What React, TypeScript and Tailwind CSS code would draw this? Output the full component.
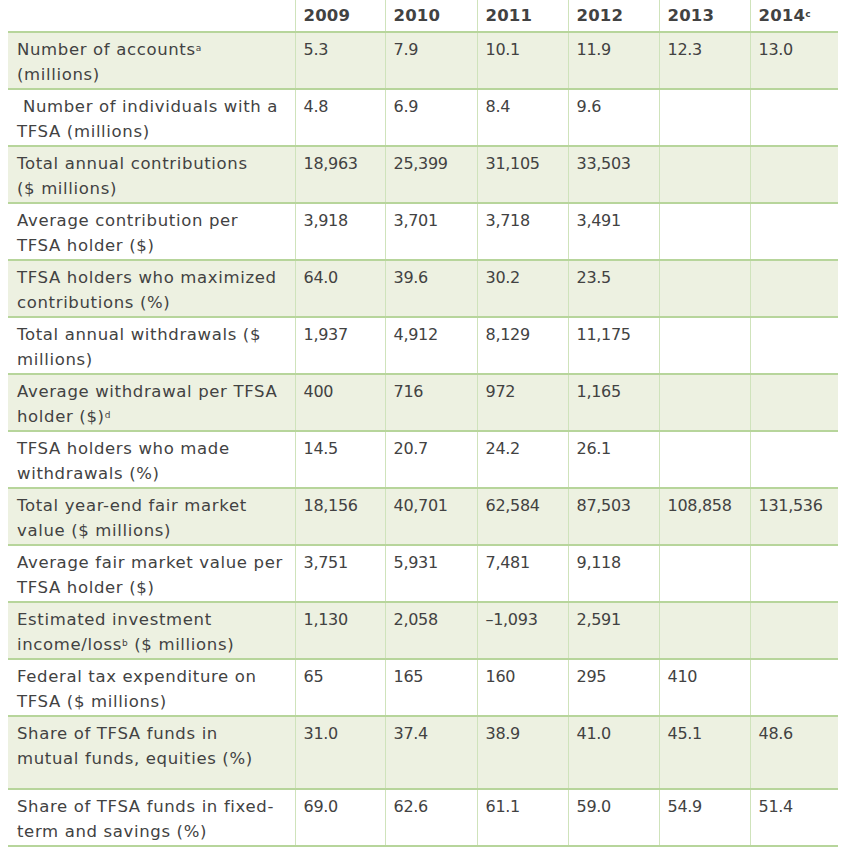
import type { ReactNode } from "react"

type Row = {
  label: ReactNode
  values: string[]
  tall?: boolean
}

const YEARS: ReactNode[] = [
  "2009",
  "2010",
  "2011",
  "2012",
  "2013",
  <>
    2014<sup className="text-[9px] font-bold">c</sup>
  </>,
]

const ROWS: Row[] = [
  {
    label: (
      <>
        Number of accounts<sup className="text-[9px]">a</sup>
        <br />
        (millions)
      </>
    ),
    values: ["5.3", "7.9", "10.1", "11.9", "12.3", "13.0"],
  },
  {
    label: (
      <>
        {"\u00a0"}Number of individuals with a<br />
        TFSA (millions)
      </>
    ),
    values: ["4.8", "6.9", "8.4", "9.6", "", ""],
  },
  {
    label: (
      <>
        Total annual contributions
        <br />
        ($ millions)
      </>
    ),
    values: ["18,963", "25,399", "31,105", "33,503", "", ""],
  },
  {
    label: (
      <>
        Average contribution per
        <br />
        TFSA holder ($)
      </>
    ),
    values: ["3,918", "3,701", "3,718", "3,491", "", ""],
  },
  {
    label: (
      <>
        TFSA holders who maximized
        <br />
        contributions (%)
      </>
    ),
    values: ["64.0", "39.6", "30.2", "23.5", "", ""],
  },
  {
    label: (
      <>
        Total annual withdrawals ($<br />
        millions)
      </>
    ),
    values: ["1,937", "4,912", "8,129", "11,175", "", ""],
  },
  {
    label: (
      <>
        Average withdrawal per TFSA
        <br />
        holder ($)<sup className="text-[9px]">d</sup>
      </>
    ),
    values: ["400", "716", "972", "1,165", "", ""],
  },
  {
    label: (
      <>
        TFSA holders who made
        <br />
        withdrawals (%)
      </>
    ),
    values: ["14.5", "20.7", "24.2", "26.1", "", ""],
  },
  {
    label: (
      <>
        Total year-end fair market
        <br />
        value ($ millions)
      </>
    ),
    values: ["18,156", "40,701", "62,584", "87,503", "108,858", "131,536"],
  },
  {
    label: (
      <>
        Average fair market value per
        <br />
        TFSA holder ($)
      </>
    ),
    values: ["3,751", "5,931", "7,481", "9,118", "", ""],
  },
  {
    label: (
      <>
        Estimated investment
        <br />
        income/loss<sup className="text-[9px]">b</sup> ($ millions)
      </>
    ),
    values: ["1,130", "2,058", "\u20131,093", "2,591", "", ""],
  },
  {
    label: (
      <>
        Federal tax expenditure on
        <br />
        TFSA ($ millions)
      </>
    ),
    values: ["65", "165", "160", "295", "410", ""],
  },
  {
    label: (
      <>
        Share of TFSA funds in
        <br />
        mutual funds, equities (%)
      </>
    ),
    values: ["31.0", "37.4", "38.9", "41.0", "45.1", "48.6"],
    tall: true,
  },
  {
    label: (
      <>
        Share of TFSA funds in fixed-
        <br />
        term and savings (%)
      </>
    ),
    values: ["69.0", "62.6", "61.1", "59.0", "54.9", "51.4"],
  },
]

export default function App() {
  return (
    <div className="min-h-screen bg-white px-2 font-['DejaVu_Sans',sans-serif] leading-[25px] text-[#424242]">
      <table className="w-[830px] table-fixed border-collapse">
        <colgroup>
          <col className="w-[287px]" />
          <col className="w-[90px]" />
          <col className="w-[92px]" />
          <col className="w-[91px]" />
          <col className="w-[91px]" />
          <col className="w-[91px]" />
          <col className="w-[88px]" />
        </colgroup>
        <thead>
          <tr className="h-[32px] border-b-2 border-[#b7d59b]">
            <th />
            {YEARS.map((year, i) => (
              <th
                key={i}
                className="border-l-[1.5px] border-[#cfe3bb] px-2 text-left align-middle text-[16.5px] font-bold tracking-[0.2px]"
              >
                {year}
              </th>
            ))}
          </tr>
        </thead>
        <tbody>
          {ROWS.map((row, i) => (
            <tr
              key={i}
              className={`border-b-2 border-[#b7d59b] ${row.tall ? "h-[73px]" : "h-[57px]"} ${
                i % 2 === 0 ? "bg-[#edf1e1]" : "bg-white"
              }`}
            >
              <td className="whitespace-nowrap px-[9px] pt-[4px] pb-0 align-top text-[16.5px] tracking-[0.65px]">
                {row.label}
              </td>
              {row.values.map((v, j) => (
                <td
                  key={j}
                  className="whitespace-nowrap border-l-[1.5px] border-[#cfe3bb] px-2 pt-[4px] pb-0 align-top text-[16px] tracking-[-0.3px]"
                >
                  {v}
                </td>
              ))}
            </tr>
          ))}
        </tbody>
      </table>
    </div>
  )
}
